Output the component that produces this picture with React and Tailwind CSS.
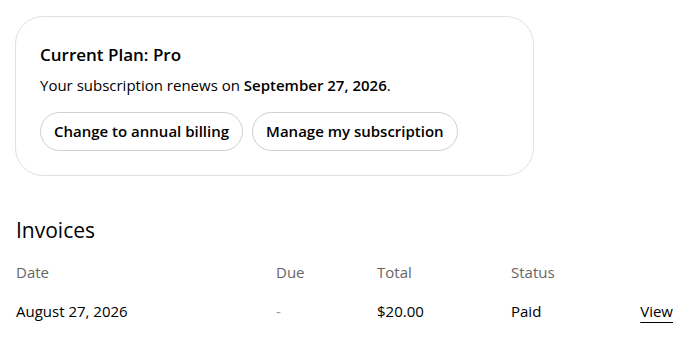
export default function App() {
  return (
    <div className="min-h-screen bg-white py-4 pl-[15px] pr-4 text-black" style={{ fontFamily: '"Open Sans", "Noto Sans", sans-serif' }}>
      <section className="w-[519px] rounded-[28px] border border-[#e1e1e1] px-6 pt-6 pb-6">
        <h2 className="text-[17px] font-semibold leading-[28px]">Current Plan: Pro</h2>
        <p className="mt-[4px] text-[15px] leading-[24px]">
          Your subscription renews on <span className="font-semibold">September 27, 2026</span>.
        </p>
        <div className="mt-[15px] flex gap-[9px]">
          <button className="h-[39px] rounded-full border border-[#cfcfcf] px-[13px] text-[15px] font-semibold">
            Change to annual billing
          </button>
          <button className="h-[39px] rounded-full border border-[#cfcfcf] px-[13px] text-[15px] font-semibold">
            Manage my subscription
          </button>
        </div>
      </section>

      <h2 className="mt-[39px] pl-px text-[21px] leading-[30px]">Invoices</h2>
      <div className="mt-[8px] grid grid-cols-[260px_101px_134px_1fr_auto] pl-px pr-px text-[15px]">
        <div className="py-2 text-[#666]">Date</div>
        <div className="py-2 text-[#666]">Due</div>
        <div className="py-2 text-[#666]">Total</div>
        <div className="py-2 text-[#666]">Status</div>
        <div className="py-2" />
        <div className="py-2">August 27, 2026</div>
        <div className="py-2 text-[#999]">-</div>
        <div className="py-2">$20.00</div>
        <div className="py-2">Paid</div>
        <div className="py-2">
          <a href="#" className="underline underline-offset-[5px]">View</a>
        </div>
      </div>
    </div>
  )
}
